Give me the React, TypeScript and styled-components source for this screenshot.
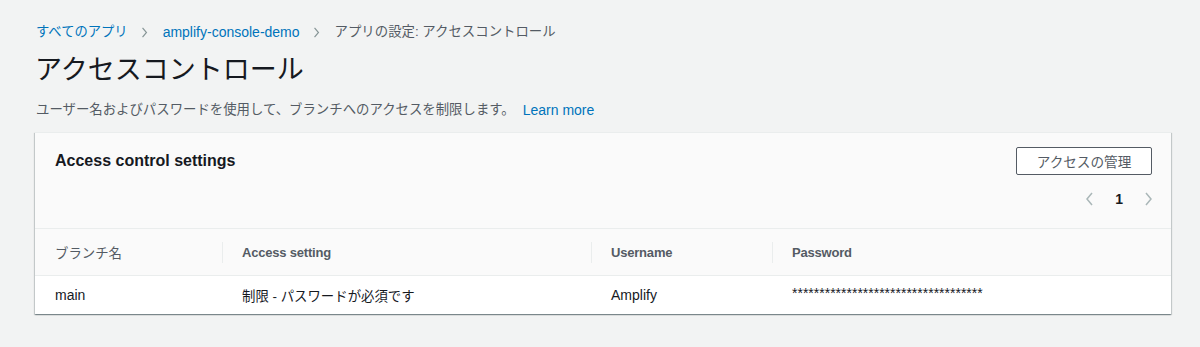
import React from "react";
import styled, { createGlobalStyle } from "styled-components";

const GlobalStyle = createGlobalStyle`
  html, body {
    margin: 0;
    padding: 0;
    background: #f2f3f3;
  }
  body {
    font-family: "Liberation Sans", "Noto Sans CJK JP", sans-serif;
    color: #16191f;
    font-size: 14px;
  }
`;

const Page = styled.div`
  padding: 22px 29px 30px 35px;
  display: flex;
  flex-direction: column;
`;

const Breadcrumbs = styled.nav`
  display: flex;
  align-items: center;
  height: 20px;
  line-height: 20px;
  padding-left: 1px;
`;

const Crumb = styled.span<{ $current?: boolean }>`
  font-size: ${(p) => (p.$current ? "13.4px" : "14px")};
  color: ${(p) => (p.$current ? "#545b64" : "#0073bb")};
`;

const JpCrumb = styled(Crumb)`
  font-size: 13.3px;
`;

const Sep = styled.span`
  display: inline-flex;
  align-items: center;
  margin: 0 15px 0 13px;
  color: #879596;
`;

const Title = styled.h1`
  margin: 10px 0 0 0;
  font-size: 27px;
  line-height: 36px;
  font-weight: 400;
  color: #16191f;
`;

const Description = styled.p`
  margin: 12px 0 0 1px;
  line-height: 20px;
  display: flex;
  align-items: center;
`;

const DescText = styled.span`
  font-size: 13.4px;
  color: #545b64;
`;

const Link = styled.a`
  color: #0073bb;
  font-size: 14px;
  margin-left: 8px;
  text-decoration: none;
`;

const Card = styled.section`
  margin-top: 12px;
  background: #fafafa;
  border-top: 1px solid #eaeded;
  box-shadow: 0 1px 1px 0 rgba(0, 28, 36, 0.3),
    1px 1px 1px 0 rgba(0, 28, 36, 0.15), -1px 1px 1px 0 rgba(0, 28, 36, 0.15);
`;

const CardHeader = styled.div`
  padding: 14px 19px 19px 20px;
  display: flex;
  flex-direction: column;
`;

const HeaderRow = styled.div`
  display: flex;
  align-items: center;
  justify-content: space-between;
  height: 28px;
`;

const CardTitle = styled.h2`
  margin: 0;
  font-size: 16px;
  font-weight: 700;
  color: #16191f;
  line-height: 22px;
`;

const Button = styled.button`
  height: 28px;
  width: 136px;
  padding: 0 18px;
  background: #fff;
  border: 1px solid #545b64;
  border-radius: 2px;
  font-family: "Liberation Sans", "Noto Sans CJK JP", sans-serif;
  font-size: 13.6px;
  color: #545b64;
`;

const Pagination = styled.div`
  margin-top: 14px;
  display: flex;
  align-items: center;
  justify-content: flex-end;
  height: 20px;
`;

const PageArrow = styled.span`
  display: inline-flex;
  align-items: center;
  color: #aab7b8;
  width: 7px;
`;

const PageNum = styled.span`
  font-weight: 700;
  font-size: 14px;
  color: #16191f;
  margin: 0 22px;
`;

const Table = styled.div`
  display: grid;
  grid-template-columns: 187px 369px 181px 1fr;
`;

const Th = styled.div<{ $first?: boolean }>`
  position: relative;
  height: 46px;
  display: flex;
  align-items: center;
  padding-left: 20px;
  border-top: 1px solid #eaeded;
  border-bottom: 1px solid #eaeded;
  font-weight: 700;
  font-size: 13px;
  letter-spacing: -0.2px;
  color: #545b64;
  background: #fafafa;
  &::before {
    content: "";
    display: ${(p) => (p.$first ? "none" : "block")};
    position: absolute;
    left: 0;
    top: 13px;
    height: 21px;
    width: 1px;
    background: #eaeded;
  }
`;

const JpTh = styled.span`
  font-weight: 400;
  font-size: 13.4px;
  letter-spacing: 0;
`;

const Td = styled.div`
  height: 38px;
  display: flex;
  align-items: center;
  padding-left: 20px;
  background: #fff;
  font-size: 14px;
  color: #16191f;
`;

const JpTd = styled.span`
  font-size: 13.4px;
`;

const Mask = styled.span`
  font-size: 14px;
  margin-top: -4px;
  color: #16191f;
`;

const Chevron = ({ dir = "right", h = 11 }: { dir?: "left" | "right"; h?: number }) => (
  <svg width={7} height={h} viewBox="0 0 7 14" fill="none" stroke="currentColor" strokeWidth={1.5}>
    {dir === "right" ? <polyline points="1,1 6,7 1,13" /> : <polyline points="6,1 1,7 6,13" />}
  </svg>
);

export default function App() {
  return (
    <>
      <GlobalStyle />
      <Page>
        <Breadcrumbs>
          <JpCrumb>すべてのアプリ</JpCrumb>
          <Sep>
            <Chevron />
          </Sep>
          <Crumb>amplify-console-demo</Crumb>
          <Sep>
            <Chevron />
          </Sep>
          <Crumb $current>アプリの設定: アクセスコントロール</Crumb>
        </Breadcrumbs>
        <Title>アクセスコントロール</Title>
        <Description>
          <DescText>ユーザー名およびパスワードを使用して、ブランチへのアクセスを制限します。</DescText>
          <Link href="#">Learn more</Link>
        </Description>
        <Card>
          <CardHeader>
            <HeaderRow>
              <CardTitle>Access control settings</CardTitle>
              <Button>アクセスの管理</Button>
            </HeaderRow>
            <Pagination>
              <PageArrow>
                <Chevron dir="left" h={14} />
              </PageArrow>
              <PageNum>1</PageNum>
              <PageArrow>
                <Chevron dir="right" h={14} />
              </PageArrow>
            </Pagination>
          </CardHeader>
          <Table>
            <Th $first>
              <JpTh>ブランチ名</JpTh>
            </Th>
            <Th>Access setting</Th>
            <Th>Username</Th>
            <Th>Password</Th>
            <Td>main</Td>
            <Td>
              <JpTd>制限 - パスワードが必須です</JpTd>
            </Td>
            <Td>Amplify</Td>
            <Td>
              <Mask>{"*".repeat(35)}</Mask>
            </Td>
          </Table>
        </Card>
      </Page>
    </>
  );
}
